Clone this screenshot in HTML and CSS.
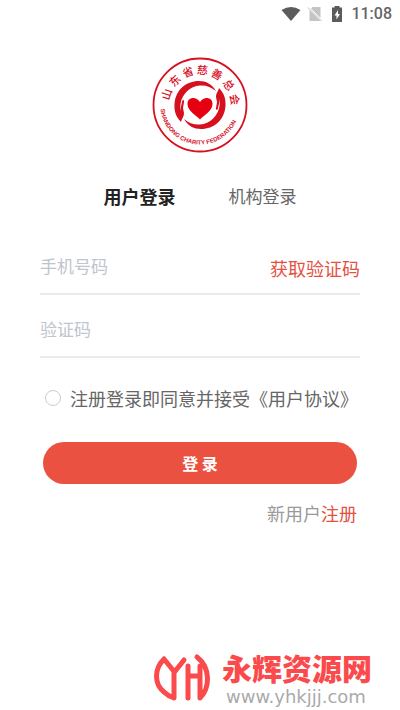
FILE: index.html
```html
<!DOCTYPE html>
<html lang="zh-CN">
<head>
    <meta charset="UTF-8">
    <meta name="viewport" content="width=device-width, initial-scale=1.0">
    <title>用户登录</title>
    <link rel="stylesheet" href="styles.css">
</head>
<body>
    <header class="status-bar">
        <svg class="icon-wifi" viewBox="0 0 20 16"><path d="M0.500 4Q10 -2 19.500 4L10 15Z" fill="#5c5c5c"/></svg>
        <svg class="icon-sim" viewBox="0 0 16 16"><path d="M5.500 1H13.500V12L4 2.500Z M2.500 4L13 14.500V15H2.500Z" fill="#c4c4c4"/><path d="M1 1.500L14.500 15" stroke="#bbb"/></svg>
        <svg class="icon-battery" viewBox="0 0 12 16"><path d="M3.500 0h5v1.500H11V16H1V1.500h2.500z" fill="#5c5c5c"/><path d="M7 4L3.500 9.500H5.500V13.500L9 8H7Z" fill="#fff"/></svg>
        <span class="clock">11:08</span>
    </header>

    <main class="login">
        <svg class="logo" viewBox="-48 -48 96 96" role="img" aria-label="山东省慈善总会">
            <circle r="46.500" fill="#fff" stroke="#d7101f" stroke-width="1.800"/>
            <g class="logo-name">
                <text transform="rotate(-72)" y="-31">山</text>
                <text transform="rotate(-46)" y="-31">东</text>
                <text transform="rotate(-20)" y="-31">省</text>
                <text transform="rotate(4)" y="-31">慈</text>
                <text transform="rotate(29)" y="-31">善</text>
                <text transform="rotate(55)" y="-31">总</text>
                <text transform="rotate(81)" y="-31">会</text>
            </g>
            <path id="arc" d="M-39.500 4A39.700 39.700 0 0 0 38.500 9.500" fill="none"/>
            <text class="logo-english"><textPath href="#arc">SHANDONG CHARITY FEDERATION</textPath></text>
            <g fill="#d7101f">
                <path d="M-19 17C-24 12 -26 6 -25.500 -1C-24.500 -15 -14 -24 -1 -24C6 -24 12 -21 16 -14C11 -18 6 -20 0 -19.500C-10 -19 -18 -11 -19.500 -1L-20 6L-18 -3C-17.500 -6 -15.500 -5 -16 -3L-17 3L-16 8C-16 12 -18 13 -19 17Z"/>
                <path d="M19 -17C24 -12 26 -6 25.500 1C24.500 15 14 24 1 24C-6 24 -12 21 -16 14C-11 18 -6 20 0 19.500C10 19 18 11 19.500 1L20 -6L18 3C17.500 6 15.500 5 16 3L17 -3L16 -8C16 -12 18 -13 19 -17Z"/>
            </g>
            <path d="M0 14.500C-4 10 -12.500 6 -12.500 -1C-12.500 -8 -4 -9 0 -3C4 -9 12.500 -8 12.500 -1C12.500 6 4 10 0 14.500Z" fill="#e60012"/>
        </svg>

        <nav class="tabs">
            <button type="button" class="tab active">用户登录</button>
            <button type="button" class="tab">机构登录</button>
        </nav>

        <form class="login-form">
            <div class="field">
                <input type="tel" placeholder="手机号码" aria-label="手机号码">
                <button type="button" class="get-code">获取验证码</button>
            </div>
            <div class="field">
                <input type="text" placeholder="验证码" aria-label="验证码">
            </div>
            <div class="agree">
                <input type="radio" id="agree">
                <label for="agree">注册登录即同意并接受《用户协议》</label>
            </div>
            <button type="submit" class="submit">登 录</button>
            <p class="register">新用户<a href="#">注册</a></p>
        </form>
    </main>

    <footer class="watermark">
        <svg class="mark" viewBox="0 0 64 56"><path d="M14 9C4 19 4 34 14 42Q18 46 24 48V22M14 9L24.500 22L34 10M38 16V48M38 26H50M50 16V48C60 38 61 18 47 7" fill="none" stroke="#fb4a4c" stroke-width="5" stroke-linecap="round" stroke-linejoin="round"/></svg>
        <div class="site">
            <strong>永辉资源网</strong>
            <span>www.yhkjjj.com</span>
        </div>
    </footer>
</body>
</html>
```
FILE: styles.css
```css
* {
    box-sizing: border-box;
}
body {
    display: flex;
    flex-direction: column;
    min-height: 100vh;
    margin: 0;
    background-color: #fff;
    color: #666;
    font-family: "Noto Sans CJK SC", sans-serif;
    font-size: 18px;
    line-height: 26px;
}
button, input {
    padding: 0;
    border: none;
    background: none;
    color: inherit;
    font: inherit;
}
button {
    cursor: pointer;
}
.status-bar {
    display: flex;
    justify-content: flex-end;
    align-items: center;
    height: 28px;
    padding-right: 8px;
}
.icon-wifi {
    width: 20px;
    height: 16px;
    margin-right: 6px;
}
.icon-sim {
    width: 16px;
    height: 16px;
    margin-right: 8px;
}
.icon-battery {
    width: 12px;
    height: 16px;
    margin-right: 8px;
}
.clock {
    color: #666;
    font-family: Roboto, sans-serif;
    font-size: 16px;
    font-weight: 500;
}
.login {
    padding: 29px 40px 0;
}
.logo {
    display: block;
    width: 96px;
    height: 96px;
    margin: 0 auto;
}
.logo-name {
    fill: #d7101f;
    font-size: 11px;
    font-weight: 500;
    text-anchor: middle;
}
.logo-english {
    fill: #d7101f;
    font-family: "Liberation Sans", sans-serif;
    font-size: 6px;
    font-weight: bold;
}
.tabs {
    display: flex;
    justify-content: center;
    gap: 53px;
    margin-top: 30px;
}
.tab {
    font-size: 17px;
}
.tab.active {
    color: #222;
    font-size: 18px;
    font-weight: bold;
}
.login-form {
    margin-top: 23px;
}
.field {
    display: flex;
    align-items: flex-end;
    height: 63px;
    padding-bottom: 12px;
    border-bottom: 2px solid #ebebeb;
}
.field input {
    flex: 1;
    min-width: 0;
    height: 32px;
    font-size: 17px;
    outline: none;
}
.field input::placeholder {
    color: #c0c4cc;
}
.get-code {
    color: #e5513f;
}
.agree {
    display: flex;
    align-items: center;
    gap: 9px;
    margin: 27px 0 31px 5px;
}
.agree input {
    flex: none;
    width: 16px;
    height: 16px;
    margin: 0;
    border: 1px solid #ccc;
    border-radius: 50%;
    appearance: none;
}
.agree input:checked {
    background-color: #eb5140;
}
.agree label {
    white-space: nowrap;
}
.submit {
    display: block;
    width: calc(100% - 6px);
    height: 42px;
    margin: 0 auto;
    border-radius: 21px;
    background-color: #eb5140;
    color: #fff;
    font-size: 16px;
    font-weight: bold;
}
.register {
    margin: 16px 3px 0;
    color: #999;
    text-align: right;
}
.register a {
    color: #e5513f;
    text-decoration: none;
}
.watermark {
    display: flex;
    justify-content: flex-end;
    align-items: flex-end;
    gap: 8px;
    margin-top: auto;
    padding: 0 28px 4px 0;
}
.mark {
    width: 64px;
    height: 56px;
}
.site {
    display: flex;
    flex-direction: column;
    gap: 6px;
}
.site strong {
    color: #fb4a4c;
    font-size: 30px;
    font-weight: 900;
    line-height: 30px;
}
.site span {
    padding-left: 4px;
    color: #aaa;
    font-family: "DejaVu Sans", sans-serif;
    font-size: 18px;
    line-height: 18px;
}
```
